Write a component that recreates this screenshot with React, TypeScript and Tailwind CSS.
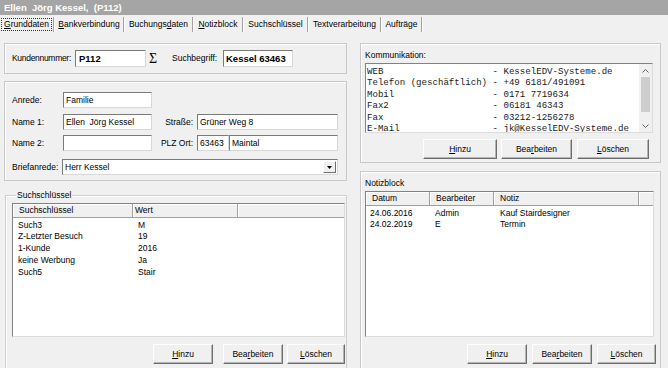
import type { ReactNode } from "react";

// Accelerator-key label: underlines the character at index i
function Acc({ text, i }: { text: string; i?: number }) {
  if (i === undefined) return <>{text}</>;
  return (
    <>
      {text.slice(0, i)}
      <u className="underline-offset-1">{text[i]}</u>
      {text.slice(i + 1)}
    </>
  );
}

const tabs: { label: string; w: string; u?: number }[] = [
  { label: "Grunddaten", w: "w-[53px]", u: 0 },
  { label: "Bankverbindung", w: "w-[68px]", u: 0 },
  { label: "Buchungsdaten", w: "w-[67px]", u: 8 },
  { label: "Notizblock", w: "w-[48px]", u: 0 },
  { label: "Suchschlüssel", w: "w-[63px]" },
  { label: "Textverarbeitung", w: "w-[71px]" },
  { label: "Aufträge", w: "w-[39px]" },
];

function TabBar() {
  return (
    <div className="flex h-[18px] items-center">
      {tabs.map((t, idx) => (
        <div key={t.label} className="flex items-center">
          <div className={`flex h-[18px] items-center justify-center ${t.w}`}>
            {idx === 0 ? (
              <span className="flex h-[13px] w-[51px] items-center justify-center border border-dotted border-[#333]">
                <Acc text={t.label} i={t.u} />
              </span>
            ) : (
              <Acc text={t.label} i={t.u} />
            )}
          </div>
          <div className="h-[15px] w-[2px] border-l border-r border-l-[#a0a0a0] border-r-white" />
        </div>
      ))}
    </div>
  );
}

function Box({
  className,
  bold,
  children,
}: {
  className: string;
  bold?: boolean;
  children?: ReactNode;
}) {
  return (
    <div
      className={`flex items-center border border-t-[#7a7a7a] border-l-[#7a7a7a] border-r-[#d8d8d8] border-b-[#d8d8d8] bg-white pl-[2px] ${
        bold ? "text-[9.5px] font-bold" : ""
      } ${className}`}
    >
      {children}
    </div>
  );
}

function Btn({ className, children }: { className: string; children: ReactNode }) {
  return (
    <div
      className={`flex h-[20px] items-center justify-center border border-t-white border-l-white border-r-[#6d6d6d] border-b-[#6d6d6d] bg-[#f0f0f0] shadow-[inset_-1px_-1px_0_#b4b4b4] ${className}`}
    >
      {children}
    </div>
  );
}

type Col = { label: string; w: string; hp: string; rp: string };

function ListView({
  cols,
  rows,
  className,
  rowH,
}: {
  cols: Col[];
  rows: string[][];
  className: string;
  rowH: string;
}) {
  return (
    <div
      className={`flex flex-col overflow-hidden border border-t-[#828282] border-l-[#828282] border-r-[#dcdcdc] border-b-[#dcdcdc] bg-white ${className}`}
    >
      <div className="flex h-[14px] shrink-0 border-b border-[#a0a0a0] bg-[#f0f0f0]">
        {cols.map((c) => (
          <div
            key={c.label}
            className={`flex items-center border-r border-[#a0a0a0] shadow-[inset_1px_1px_0_#fff] ${c.w} ${c.hp}`}
          >
            {c.label}
          </div>
        ))}
        <div className="flex-1 shadow-[inset_1px_1px_0_#fff]" />
      </div>
      <div className="pt-[1px]">
        {rows.map((r) => (
          <div key={r[0]} className={`flex items-center ${rowH}`}>
            {r.map((v, i) => (
              <div key={i} className={`${cols[i].w} ${cols[i].rp}`}>
                {v}
              </div>
            ))}
          </div>
        ))}
      </div>
    </div>
  );
}

function Chevron({ up }: { up?: boolean }) {
  return (
    <svg width="7" height="4" viewBox="0 0 7 4">
      <polyline
        points={up ? "0.5,3.5 3.5,0.5 6.5,3.5" : "0.5,0.5 3.5,3.5 6.5,0.5"}
        fill="none"
        stroke="#606060"
        strokeWidth="1"
      />
    </svg>
  );
}

const kommunikation = [
  "WEB                    - KesselEDV-Systeme.de",
  "Telefon (geschäftlich) - +49 6181/491091",
  "Mobil                  - 0171 7719634",
  "Fax2                   - 06181 46343",
  "Fax                    - 03212-1256278",
  "E-Mail                 - jk@KesselEDV-Systeme.de",
];

const panel = "border border-[#c8c8c8] shadow-[inset_1px_1px_0_#ffffff]";

export default function App() {
  return (
    <div className="h-[368px] w-[668px] overflow-hidden bg-[#f0f0f0] font-['Liberation_Sans',Arial,sans-serif] text-[8.5px] leading-none text-black">
      <div className="flex h-[15px] items-center bg-[#a5a5a5] pl-[4px] text-[9.5px] font-bold text-white">
        Ellen&nbsp; Jörg Kessel,&nbsp; (P112)
      </div>
      <TabBar />

      <div className="flex pl-[4px] pt-[10px]">
        {/* left column */}
        <div className="flex w-[343px] flex-col">
          <div className={`flex h-[31px] items-center pl-[7px] ${panel}`}>
            <span className="w-[63px] tracking-[-0.3px]">Kundennummer:</span>
            <Box className="h-[17px] w-[71px] pl-[3px]" bold>
              P112
            </Box>
            <span className="ml-[3px] w-[23px] font-['Liberation_Serif',serif] text-[14px]">Σ</span>
            <span className="w-[51px]">Suchbegriff:</span>
            <Box className="h-[17px] w-[70px]" bold>
              Kessel 63463
            </Box>
          </div>

          <div className={`mt-[7px] flex h-[100px] flex-col pl-[7px] pt-[10px] ${panel}`}>
            <div className="flex h-[16px] items-center">
              <span className="w-[51px]">Anrede:</span>
              <Box className="h-[16px] w-[89px]">Familie</Box>
            </div>
            <div className="mt-[6px] flex h-[16px] items-center">
              <span className="w-[51px]">Name 1:</span>
              <Box className="h-[16px] w-[89px]">Ellen&nbsp; Jörg Kessel</Box>
              <span className="w-[45px] pr-[4px] text-right">Straße:</span>
              <Box className="h-[16px] w-[141px]">Grüner Weg 8</Box>
            </div>
            <div className="mt-[5px] flex h-[16px] items-center">
              <span className="w-[51px]">Name 2:</span>
              <Box className="h-[16px] w-[89px]" />
              <span className="w-[45px] pr-[4px] text-right">PLZ Ort:</span>
              <Box className="h-[16px] w-[32px]">63463</Box>
              <Box className="h-[16px] w-[109px]">Maintal</Box>
            </div>
            <div className="mt-[8px] flex h-[16px] items-center">
              <span className="w-[50px]">Briefanrede:</span>
              <Box className="h-[16px] w-[276px] justify-between pr-[1px]">
                <span>Herr Kessel</span>
                <span className="flex h-[12px] w-[13px] items-center justify-center border border-t-white border-l-white border-r-[#6d6d6d] border-b-[#6d6d6d] bg-[#f0f0f0]">
                  <svg width="5" height="3" viewBox="0 0 5 3">
                    <polygon points="0,0 5,0 2.5,3" fill="#000" />
                  </svg>
                </span>
              </Box>
            </div>
          </div>

          <fieldset className="mt-[9px] ml-[1px] h-[200px] border border-[#d0d0d0] pl-[6px] shadow-[inset_1px_1px_0_#fff]">
            <legend className="ml-[4px] px-[1px] leading-[10px]">Suchschlüssel</legend>
            <ListView
              className="mt-[3px] h-[134px] w-[333px]"
              rowH="h-[11.8px]"
              cols={[
                { label: "Suchschlüssel", w: "w-[120px]", hp: "pl-[6px]", rp: "pl-[5px]" },
                { label: "Wert", w: "w-[105px]", hp: "pl-[2px]", rp: "pl-[5px]" },
              ]}
              rows={[
                ["Such3", "M"],
                ["Z-Letzter Besuch", "19"],
                ["1-Kunde", "2016"],
                ["keine Werbung", "Ja"],
                ["Such5", "Stair"],
              ]}
            />
            <div className="mt-[7px] flex">
              <Btn className="ml-[141px] w-[60px]">
                <Acc text="Hinzu" i={0} />
              </Btn>
              <Btn className="ml-[10px] w-[60px]">
                <Acc text="Bearbeiten" i={3} />
              </Btn>
              <Btn className="ml-[4px] w-[58px]">
                <Acc text="Löschen" i={0} />
              </Btn>
            </div>
          </fieldset>
        </div>

        {/* right column */}
        <div className="ml-[13px] flex w-[301px] flex-col">
          <div className={`flex h-[120px] flex-col pl-[4px] pt-[6px] ${panel}`}>
            <span className="leading-[10px]">Kommunikation:</span>
            <div className="mt-[3px] flex h-[70px] w-[288px] border border-t-[#828282] border-l-[#828282] border-r-[#dcdcdc] border-b-[#dcdcdc] bg-white">
              <div className="flex-1 overflow-hidden pl-[1px] pt-[1.5px] font-['Liberation_Mono',monospace] text-[9.1px] leading-[11.6px] whitespace-pre text-[#1a1a1a]">
                {kommunikation.map((l) => (
                  <div key={l}>{l}</div>
                ))}
              </div>
              <div className="flex w-[13px] flex-col bg-[#f0f0f0]">
                <div className="flex h-[13px] items-center justify-center">
                  <Chevron up />
                </div>
                <div className="mx-[2px] h-[35px] bg-[#cdcdcd]" />
                <div className="flex-1" />
                <div className="flex h-[12px] items-center justify-center">
                  <Chevron />
                </div>
              </div>
            </div>
            <div className="mt-[6px] flex">
              <Btn className="ml-[58px] w-[74px]">
                <Acc text="Hinzu" i={0} />
              </Btn>
              <Btn className="ml-[4px] w-[71px]">
                <Acc text="Bearbeiten" i={3} />
              </Btn>
              <Btn className="ml-[5px] w-[72px]">
                <Acc text="Löschen" i={0} />
              </Btn>
            </div>
          </div>

          <div className={`mt-[8px] flex h-[200px] flex-col pl-[4px] pt-[6px] ${panel}`}>
            <span className="leading-[10px]">Notizblock</span>
            <ListView
              className="mt-[3px] h-[146px] w-[289px]"
              rowH="h-[11.5px]"
              cols={[
                { label: "Datum", w: "w-[64px]", hp: "pl-[6px]", rp: "pl-[4px]" },
                { label: "Bearbeiter", w: "w-[64px]", hp: "pl-[6px]", rp: "pl-[5px]" },
                { label: "Notiz", w: "w-[145px]", hp: "pl-[6px]", rp: "pl-[6px]" },
              ]}
              rows={[
                ["24.06.2016", "Admin", "Kauf Stairdesigner"],
                ["24.02.2019", "E", "Termin"],
              ]}
            />
            <div className="mt-[7px] flex">
              <Btn className="ml-[102px] w-[60px]">
                <Acc text="Hinzu" i={0} />
              </Btn>
              <Btn className="ml-[5px] w-[60px]">
                <Acc text="Bearbeiten" i={3} />
              </Btn>
              <Btn className="ml-[5px] w-[59px]">
                <Acc text="Löschen" i={0} />
              </Btn>
            </div>
          </div>
        </div>
      </div>
    </div>
  );
}
